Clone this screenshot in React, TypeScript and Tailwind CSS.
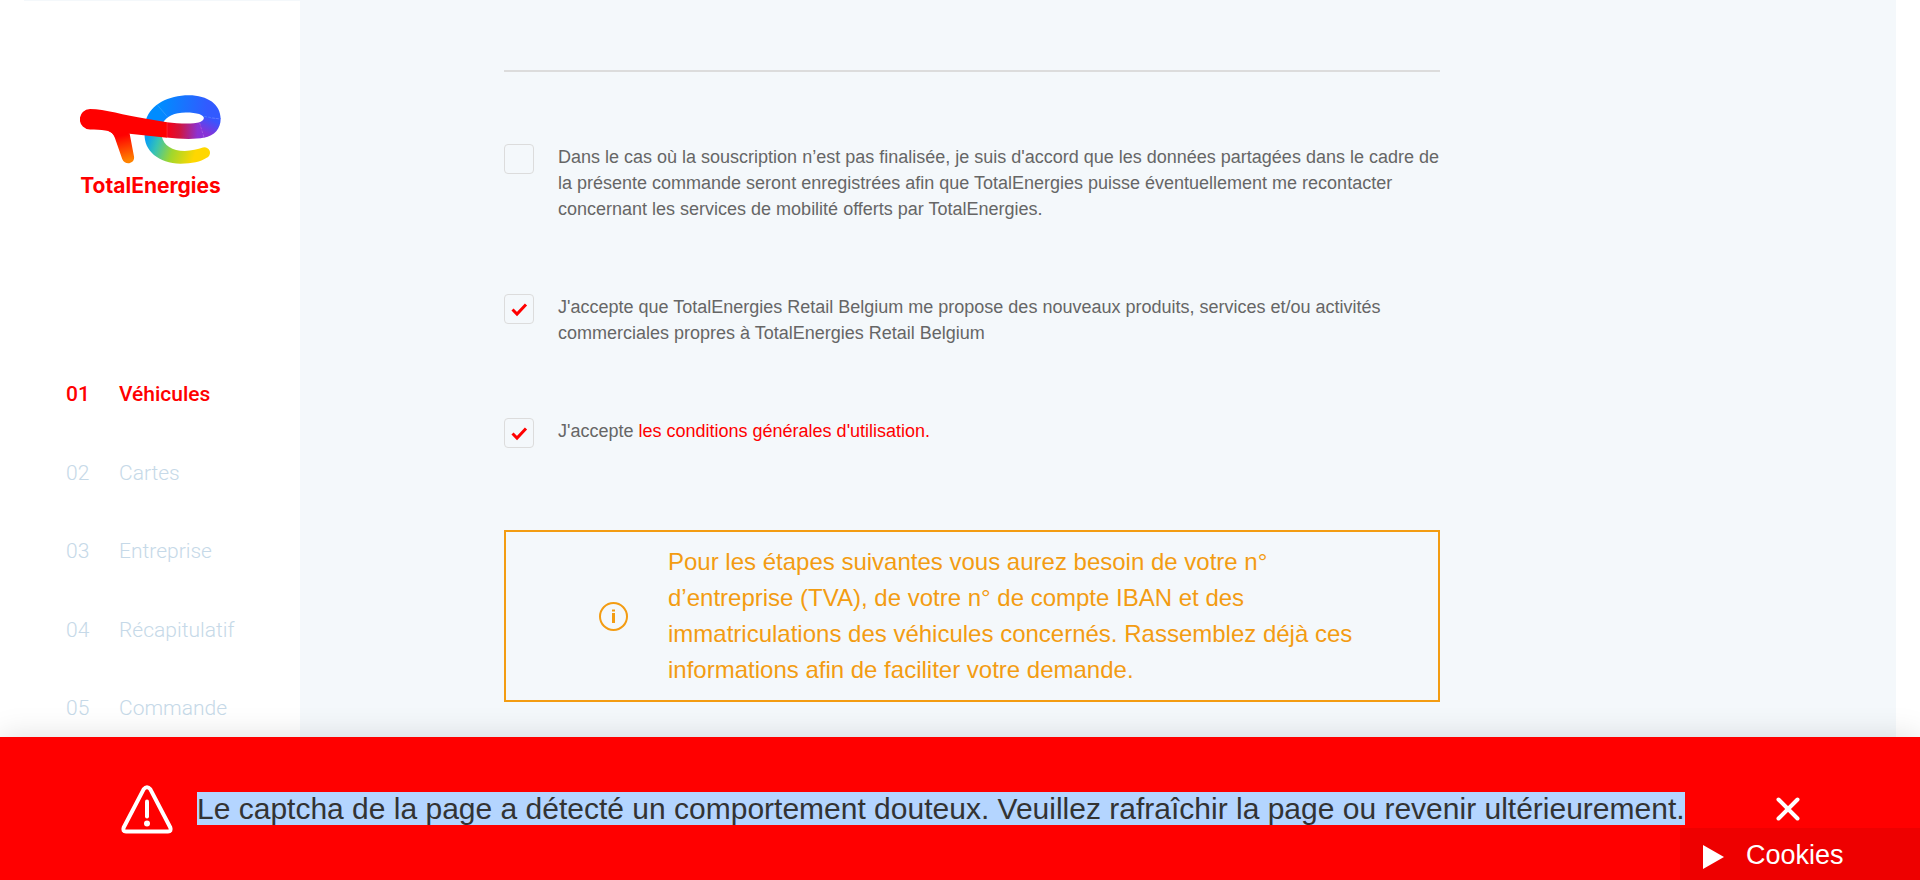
import { useState } from "react";

const steps = [
  { number: "01", label: "Véhicules" },
  { number: "02", label: "Cartes" },
  { number: "03", label: "Entreprise" },
  { number: "04", label: "Récapitulatif" },
  { number: "05", label: "Commande" },
];

function Logo() {
  return (
    <a href="#" className="flex w-[141px] flex-col text-[#ff0000]">
      <svg viewBox="60 44 421 206" className="block h-[69px] w-full" aria-hidden="true">
        <defs>
          <linearGradient id="leg" gradientUnits="userSpaceOnUse" x1="185" y1="165" x2="203" y2="240">
            <stop offset="0" stopColor="#ff0000" />
            <stop offset="1" stopColor="#ff8200" />
          </linearGradient>
          <linearGradient id="top" gradientUnits="userSpaceOnUse" x1="300" y1="80" x2="440" y2="95">
            <stop offset="0" stopColor="#008cff" />
            <stop offset="1" stopColor="#325aff" />
          </linearGradient>
          <linearGradient id="band" gradientUnits="userSpaceOnUse" x1="318" y1="148" x2="428" y2="150">
            <stop offset="0" stopColor="#fa0014" />
            <stop offset="0.35" stopColor="#d2143c" />
            <stop offset="0.85" stopColor="#8c32d2" />
            <stop offset="1" stopColor="#8732d7" />
          </linearGradient>
          <linearGradient id="turn" gradientUnits="userSpaceOnUse" x1="430" y1="155" x2="452" y2="115">
            <stop offset="0" stopColor="#8732d7" />
            <stop offset="1" stopColor="#3755ff" />
          </linearGradient>
          <linearGradient id="tail" gradientUnits="userSpaceOnUse" x1="262" y1="170" x2="420" y2="225">
            <stop offset="0" stopColor="#0aa0f0" />
            <stop offset="0.2" stopColor="#37c3b4" />
            <stop offset="0.5" stopColor="#a0d72d" />
            <stop offset="0.9" stopColor="#ffd700" />
          </linearGradient>
        </defs>
        <path fill="url(#tail)" d="M253 160 C250 210 295 249 360 249 C395 249 420 243 437 232 A16 16 0 0 0 427 201 C412 206 393 211 373 211 C335 211 310 194 304 168 Z" />
        <path fill="url(#top)" d="M257 118 C272 73 323 45 385 45 C441 45 480 72 480 116 L430 113 C430 103 410 96 376 96 C342 96 318 108 308 126 Z" />
        <path fill="url(#turn)" d="M480 114 C480 145 462 165 430 172 L416 126 C424 123 430 119 430 112 Z" />
        <path fill="url(#band)" d="M319 125 C355 129 395 131 418 125 L431 171 C400 178 355 175 319 171 Z" />
        <path fill="url(#leg)" d="M140 149 C153 153 160 160 164 172 L186 235 C195 257 226 249 221 226 L208 158 Z" />
        <path fill="#ff0000" d="M90 86 C135 86 190 105 258 115 L320 125 V172 L208 160 C198 158 172 166 163 166 C152 146 124 149 90 147 A30.5 30.5 0 0 1 90 86 Z" />
        <g fill="none" stroke="#fff" strokeOpacity="0.3" strokeWidth="1.5">
          <path d="M292 75 L320 108" />
          <path d="M431 108 L479 116" strokeDasharray="8 4" />
          <path d="M320 125 V172" />
          <path d="M417 127 L430 170" strokeDasharray="8 4" />
        </g>
      </svg>
      <span className="mt-1.5 self-center font-['Inter','Open_Sans',sans-serif] text-[21px] leading-8 font-bold">TotalEnergies</span>
    </a>
  );
}

function Sidebar() {
  return (
    <aside className="w-75 shrink-0 bg-white pl-6">
      <div className="border-t border-[#f4f8fb] pt-[94px] pl-14">
        <Logo />
        <nav aria-label="Étapes" className="-ml-[14px] pt-[180px]">
          <ol className="flex h-[338px] flex-col justify-between">
            {steps.map((step, index) => (
              <li key={step.number}>
                <a
                  href={`#${step.number}`}
                  className={
                    index === 0
                      ? "flex font-['Roboto',sans-serif] text-[21px] leading-6 font-medium text-[#ff0000]"
                      : "flex font-['Roboto',sans-serif] text-[21px] leading-6 font-light text-[#c6d9e8]"
                  }
                >
                  <span className="w-[53px]">{step.number}</span>
                  <span>{step.label}</span>
                </a>
              </li>
            ))}
          </ol>
        </nav>
      </div>
    </aside>
  );
}

function Consent({ id, checked, children }: { id: string; checked?: boolean; children: React.ReactNode }) {
  return (
    <div className="flex items-start gap-6">
      <span className="grid size-[30px] shrink-0">
        <input
          id={id}
          type="checkbox"
          defaultChecked={checked}
          className="peer col-start-1 row-start-1 size-[30px] appearance-none rounded-sm border border-[#dcdcdc]"
        />
        <svg
          viewBox="0 0 30 30"
          className="pointer-events-none invisible col-start-1 row-start-1 size-[30px] peer-checked:visible"
          fill="none"
          stroke="#ff0000"
          strokeWidth="3"
          aria-hidden="true"
        >
          <path d="M8.5 15.5 L13 20 L22 10.5" />
        </svg>
      </span>
      <label htmlFor={id} className="text-lg leading-[26px] text-[#666]">
        {children}
      </label>
    </div>
  );
}

export default function App() {
  const [alertOpen, setAlertOpen] = useState(true);
  return (
    <div className="flex h-screen flex-col overflow-hidden bg-white font-['Liberation_Sans',Arial,sans-serif]">
      <div className="flex min-h-0 flex-1 overflow-hidden pr-6">
        <Sidebar />
        <main className="flex-1 bg-[#f4f8fb] pr-114 pl-51">
          <hr className="mt-[70px] border-t-2 border-[#dcdcdc]" />
          <form className="flex flex-col gap-18 pt-18">
            <Consent id="recontact">
              Dans le cas où la souscription n’est pas finalisée, je suis d'accord que les données partagées dans le
              cadre de la présente commande seront enregistrées afin que TotalEnergies puisse éventuellement me
              recontacter concernant les services de mobilité offerts par TotalEnergies.
            </Consent>
            <Consent id="offres" checked>
              J'accepte que TotalEnergies Retail Belgium me propose des nouveaux produits, services et/ou activités
              commerciales propres à TotalEnergies Retail Belgium
            </Consent>
            <Consent id="conditions" checked>
              J'accepte{" "}
              <a href="#conditions-generales" className="text-[#ff0000]">
                les conditions générales d'utilisation.
              </a>
            </Consent>
          </form>
          <div className="mt-[82px] flex items-center gap-10 border-2 border-[#f39c12] py-3 pr-16 pl-[93px] text-2xl leading-9 text-[#f39c12]">
            <svg viewBox="0 0 29 29" className="size-[29px] shrink-0" fill="none" aria-hidden="true">
              <circle cx="14.5" cy="14.5" r="13.5" stroke="#f39c12" strokeWidth="2" />
              <path d="M13 7.5h3v2h-3zM13 11h3v10h-3z" fill="#f39c12" />
            </svg>
            <p>
              Pour les étapes suivantes vous aurez besoin de votre n° d’entreprise (TVA), de votre n° de compte IBAN et
              des immatriculations des véhicules concernés. Rassemblez déjà ces informations afin de faciliter votre
              demande.
            </p>
          </div>
        </main>
      </div>
      {alertOpen && (
        <footer
          role="alert"
          className="relative flex h-[143px] shrink-0 items-center bg-[#ff0000] pr-30 pl-30 shadow-[0_0_30px_rgba(0,0,0,0.13)]"
        >
          <svg
            viewBox="0 0 54 50"
            className="mr-[23px] h-[50px] w-[54px] shrink-0"
            fill="none"
            stroke="#fff"
            strokeLinecap="round"
            strokeLinejoin="round"
            aria-hidden="true"
          >
            <path strokeWidth="4" d="M23.6 5.3 L3.7 43.5 Q2.3 47.5 6 47.5 H48 Q51.7 47.5 50.3 43.5 L30.4 5.3 Q27 1.3 23.6 5.3 Z" />
            <path strokeWidth="4" d="M27 17.5 V32.5" />
            <circle cx="27" cy="39.5" r="3" fill="#fff" stroke="none" />
          </svg>
          <p className="flex-1 text-[30px] leading-9 text-[#333]">
            <span className="bg-[#b4d5ff]">
              Le captcha de la page a détecté un comportement douteux. Veuillez rafraîchir la page ou revenir
              ultérieurement.
            </span>
          </p>
          <button type="button" aria-label="Fermer" onClick={() => setAlertOpen(false)} className="shrink-0">
            <svg viewBox="0 0 24 24" className="size-6" stroke="#fff" strokeWidth="4" strokeLinecap="round" aria-hidden="true">
              <path d="M2.5 2.5 L21.5 21.5 M21.5 2.5 L2.5 21.5" />
            </svg>
          </button>
        </footer>
      )}
      <button
        type="button"
        className="fixed right-0 bottom-0 flex h-[52px] w-60 items-center gap-[22px] bg-[#ee0000] pt-0.5 pl-[23px] text-[27px] leading-8 text-white"
      >
        <svg viewBox="0 0 21 24" className="mt-1 h-6 w-[21px]" fill="#fff" aria-hidden="true">
          <path d="M0 0 L21 12 L0 24 Z" />
        </svg>
        <span>Cookies</span>
      </button>
    </div>
  );
}
